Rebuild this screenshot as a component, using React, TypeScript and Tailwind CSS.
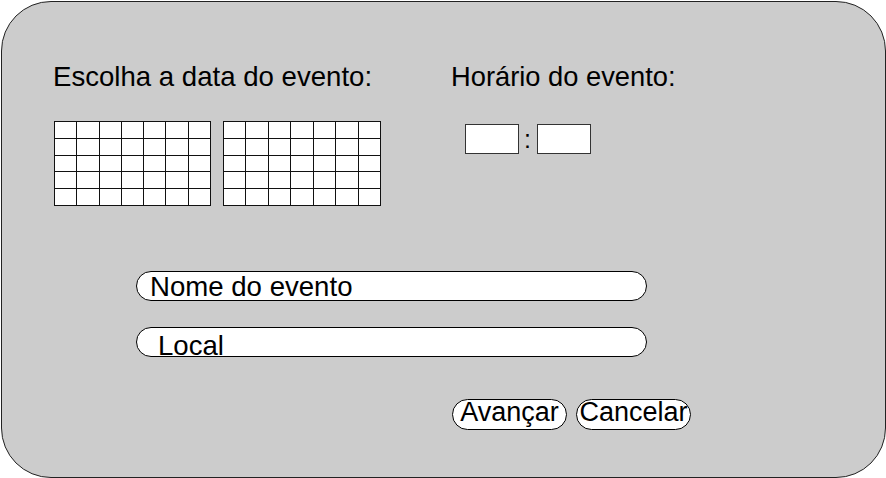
import React from "react";

const font = { fontFamily: '"Liberation Sans", Arial, sans-serif' };

function Grid({ w }: { w: string }) {
  const cells = Array.from({ length: 35 });
  return (
    <div className={`grid grid-cols-7 grid-rows-5 gap-px p-px bg-[#111] h-[85px] ${w}`}>
      {cells.map((_, i) => (
        <div key={i} className="bg-white" />
      ))}
    </div>
  );
}

export default function App() {
  return (
    <div className="w-[886px] h-[478px] bg-white p-px" style={font}>
      <div className="w-[885px] h-[477px] bg-[#cccccc] border border-[#222] rounded-[50px] flex flex-col text-black">
        <div className="flex pt-[61px] pl-[51px]">
          <div className="w-[398px] flex flex-col">
            <div className="text-[27.6px] leading-[27px] whitespace-nowrap">Escolha a data do evento:</div>
            <div className="flex gap-[12px] mt-[31px] ml-px">
              <Grid w="w-[157px]" />
              <Grid w="w-[158px]" />
            </div>
          </div>
          <div className="flex flex-col">
            <div className="text-[27.3px] leading-[27px] whitespace-nowrap">Horário do evento:</div>
            <div className="flex items-start mt-[34px] ml-[14px]">
              <div className="w-[54px] h-[30px] bg-white border border-[#333]" />
              <span className="text-[25px] leading-[30px] ml-[5px] mr-[6px]">:</span>
              <div className="w-[54px] h-[30px] bg-white border border-[#333]" />
            </div>
          </div>
        </div>

        <div className="ml-[134px] mt-[65px] w-[511px] h-[30px] bg-white border border-black rounded-full pl-[13px] pt-px">
          <div className="text-[27.6px] leading-[27px] whitespace-nowrap">Nome do evento</div>
        </div>
        <div className="ml-[134px] mt-[26px] w-[511px] h-[30px] bg-white border border-black rounded-full pl-[21px] pt-[4px]">
          <div className="text-[27.6px] leading-[27px] whitespace-nowrap">Local</div>
        </div>

        <div className="flex ml-[450px] mt-[42px] gap-[9px]">
          <div className="w-[115px] h-[31px] bg-white border border-black rounded-full flex justify-center items-start">
            <span className="text-[27px] leading-[24px]">Avançar</span>
          </div>
          <div className="w-[115px] h-[31px] bg-white border border-black rounded-full flex justify-center items-start">
            <span className="text-[27px] leading-[24px]">Cancelar</span>
          </div>
        </div>
      </div>
    </div>
  );
}
